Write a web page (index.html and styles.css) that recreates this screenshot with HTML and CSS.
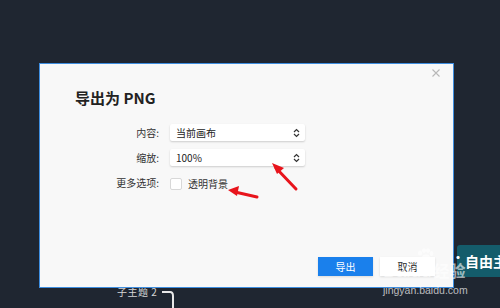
FILE: index.html
```html
<!DOCTYPE html>
<html lang="zh">
<head>
<meta charset="utf-8">
<link rel="stylesheet" href="styles.css">
</head>
<body>
<div class="canvas">
  <div class="node-teal">自由主</div>
  <div class="dot">·</div>
  <div class="sub-topic">子主题 2</div>
  <svg class="branch" width="20" height="20" viewBox="0 0 20 20"><path d="M1 2 H9 Q12 2 12 6 V20" fill="none" stroke="#e8e8e8" stroke-width="2"/></svg>

  <div class="dialog">
    <div class="close">
      <svg width="8" height="8" viewBox="0 0 8 8"><path d="M0.5 0.5 L7.5 7.5 M7.5 0.5 L0.5 7.5" stroke="#b8b8b8" stroke-width="1.1"/></svg>
    </div>
    <h1 class="title">导出为 PNG</h1>
    <div class="form">
      <div class="label">内容:</div>
      <div class="select"><span>当前画布</span><svg class="chev" width="7" height="10" viewBox="0 0 7 10"><path d="M1 4 L3.5 1.5 L6 4 M1 6 L3.5 8.5 L6 6" fill="none" stroke="#333" stroke-width="1.2"/></svg></div>
      <div class="label">缩放:</div>
      <div class="select"><span>100%</span><svg class="chev" width="7" height="10" viewBox="0 0 7 10"><path d="M1 4 L3.5 1.5 L6 4 M1 6 L3.5 8.5 L6 6" fill="none" stroke="#333" stroke-width="1.2"/></svg></div>
      <div class="label">更多选项:</div>
      <div class="check-row"><span class="checkbox"></span><span>透明背景</span></div>
    </div>
    <div class="actions">
      <button class="btn primary">导出</button>
      <button class="btn">取消</button>
    </div>
  </div>

  <div class="watermark">
    <svg class="paw" width="18" height="14" viewBox="0 0 18 14">
      <ellipse cx="4" cy="5" rx="2" ry="2.6" fill="rgba(255,255,255,0.6)"/>
      <ellipse cx="8" cy="2.6" rx="2" ry="2.4" fill="rgba(255,255,255,0.6)"/>
      <ellipse cx="12" cy="2.6" rx="2" ry="2.4" fill="rgba(255,255,255,0.6)"/>
      <ellipse cx="15.5" cy="5.5" rx="1.8" ry="2.4" fill="rgba(255,255,255,0.6)"/>
      <ellipse cx="10" cy="10" rx="4" ry="3.4" fill="rgba(255,255,255,0.6)"/>
    </svg>
    <div class="wm-logo">Baidu<span class="wm-cn">经验</span></div>
    <div class="wm-url">jingyan.baidu.com</div>
  </div>

  <svg class="arrows" width="500" height="308" viewBox="0 0 500 308">
    <path d="M296 189 L276 168" stroke="#e8141c" stroke-width="3" stroke-linecap="round"/>
    <path d="M272 163 L284 168 L277 174 Z" fill="#e8141c"/>
    <path d="M257 197 L235 192" stroke="#e8141c" stroke-width="3" stroke-linecap="round"/>
    <path d="M228 190 L239 186 L237 196 Z" fill="#e8141c"/>
  </svg>
</div>
</body>
</html>
```
FILE: styles.css
```css
* { box-sizing: border-box; }
html, body { margin: 0; padding: 0; }
body {
  background: #1f2631;
  font-family: "Noto Sans CJK SC", "Noto Sans", sans-serif;
}
.canvas {
  position: relative;
  width: 500px;
  height: 308px;
  overflow: hidden;
  background: #1f2631;
}
.node-teal {
  position: absolute;
  left: 457px;
  top: 245px;
  width: 60px;
  height: 32px;
  background: #145c6b;
  border-radius: 3px;
  color: #fff;
  font-weight: 700;
  font-size: 14px;
  line-height: 32px;
  padding-left: 8px;
}
.dot {
  position: absolute;
  left: 452px;
  top: 249px;
  color: #fff;
  font-size: 12px;
  font-weight: 700;
}
.sub-topic {
  position: absolute;
  left: 117px;
  top: 285px;
  color: #d6d6d6;
  font-size: 10px;
  line-height: 14px;
  letter-spacing: 0.5px;
}
.branch {
  position: absolute;
  left: 161px;
  top: 290px;
}
.dialog {
  position: absolute;
  left: 39px;
  top: 63px;
  width: 415px;
  height: 225px;
  background: #f8f8f8;
  border: 1px solid #3e8ee0;
  padding: 23px 0 0 35px;
  display: flex;
  flex-direction: column;
}
.close {
  position: absolute;
  right: 13px;
  top: 5px;
  line-height: 0;
}
.title {
  margin: 0;
  font-size: 15px;
  font-weight: 700;
  color: #222;
  line-height: 22px;
}
.form {
  margin-top: 15px;
  display: grid;
  grid-template-columns: 84px 135px;
  column-gap: 11px;
  row-gap: 8px;
  align-items: center;
  font-size: 10px;
  color: #333;
}
.label {
  text-align: right;
  line-height: 17px;
}
.select {
  height: 17px;
  background: #fff;
  box-shadow: 0 1px 2px rgba(0,0,0,0.18);
  border-radius: 2px;
  display: flex;
  align-items: center;
  justify-content: space-between;
  padding: 0 5px 0 6px;
  color: #222;
}
.chev { display: block; }
.check-row {
  display: flex;
  align-items: center;
  gap: 6px;
  height: 14px;
  margin-top: 2px;
}
.checkbox {
  width: 12px;
  height: 12px;
  background: #fff;
  border: 1px solid #d8d8d8;
  border-radius: 2px;
}
.actions {
  margin-top: auto;
  margin-bottom: 11px;
  margin-right: 18px;
  display: flex;
  justify-content: flex-end;
  gap: 7px;
}
.btn {
  width: 55px;
  height: 19px;
  border: none;
  background: #fff;
  color: #222;
  font-family: inherit;
  font-size: 10px;
  padding: 0;
  box-shadow: 0 1px 2px rgba(0,0,0,0.12);
}
.btn.primary {
  background: #1a80ec;
  color: #fff;
}
.watermark {
  position: absolute;
  left: 383px;
  top: 248px;
  color: rgba(255,255,255,0.6);
  font-family: "Liberation Sans", sans-serif;
}
.watermark .paw {
  display: block;
  margin-left: 33px;
}
.wm-logo {
  font-size: 19px;
  font-weight: 400;
  line-height: 20px;
  margin-top: -2px;
}
.wm-cn { font-family: "Noto Sans CJK SC", sans-serif; font-size: 16px; font-weight: 700; margin-left: 2px; }
.wm-url {
  font-size: 10.5px;
  line-height: 12px;
  margin-top: 3px;
  color: rgba(255,255,255,0.7);
}
.arrows {
  position: absolute;
  left: 0;
  top: 0;
  pointer-events: none;
}
```
